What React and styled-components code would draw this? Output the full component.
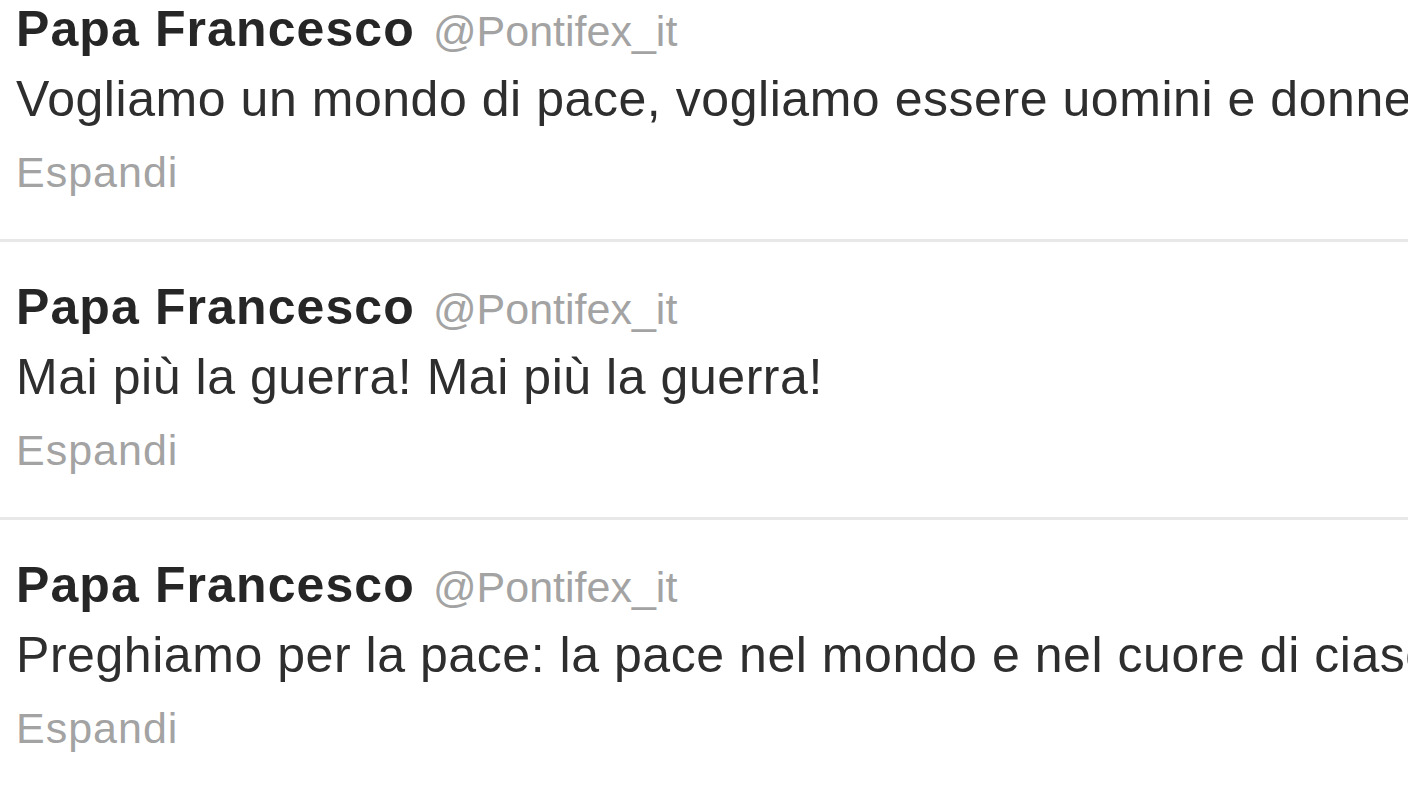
import React from "react";
import styled, { createGlobalStyle } from "styled-components";

const GlobalStyle = createGlobalStyle`
  html, body {
    margin: 0;
    padding: 0;
    background: #ffffff;
    overflow: hidden;
  }
  body {
    font-family: "Liberation Sans", Arial, sans-serif;
  }
`;

const tweets = [
  {
    id: 1,
    text: "Vogliamo un mondo di pace, vogliamo essere uomini e donne di pace.",
  },
  {
    id: 2,
    text: "Mai più la guerra! Mai più la guerra!",
  },
  {
    id: 3,
    text: "Preghiamo per la pace: la pace nel mondo e nel cuore di ciascuno.",
  },
];

export default function App() {
  return (
    <>
      <GlobalStyle />
      <Stream>
        {tweets.map((t) => (
          <Tweet key={t.id}>
            <Header>
              <FullName>Papa Francesco</FullName>
              <Handle>@Pontifex_it</Handle>
            </Header>
            <Text>{t.text}</Text>
            <Expand>Espandi</Expand>
          </Tweet>
        ))}
      </Stream>
    </>
  );
}

const Stream = styled.ol`
  list-style: none;
  margin: -36px 0 0 0;
  padding: 0;
  width: 1408px;
  overflow: hidden;
`;

const Tweet = styled.li`
  padding: 31px 0 29px 16px;
  border-bottom: 3px solid #e8e8e8;
`;

const Header = styled.div`
  display: flex;
  align-items: baseline;
  height: 69px;
  line-height: 69px;
  white-space: nowrap;
`;

const FullName = styled.strong`
  font-size: 50px;
  font-weight: 700;
  letter-spacing: 1.1px;
  color: #262626;
`;

const Handle = styled.span`
  margin-left: 18px;
  font-size: 43px;
  color: #a3a3a3;
`;

const Text = styled.p`
  margin: 0;
  font-size: 50px;
  line-height: 70px;
  letter-spacing: 0.55px;
  color: #2e2e2e;
  white-space: nowrap;
  overflow: hidden;
`;

const Expand = styled.div`
  font-size: 43px;
  line-height: 76px;
  letter-spacing: 1px;
  color: #a3a3a3;
`;
